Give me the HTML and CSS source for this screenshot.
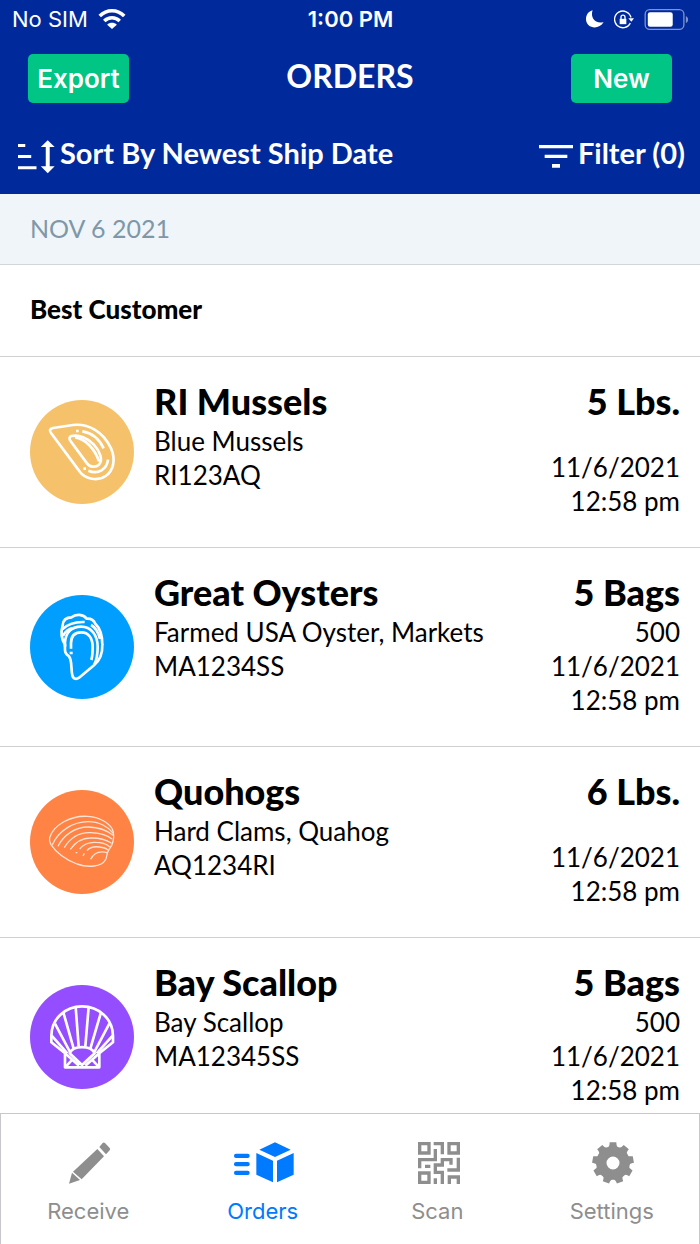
FILE: index.html
```
<!DOCTYPE html>
<html lang="en">

<head>
	<meta charset="UTF-8">
	<meta name="viewport" content="width=device-width, initial-scale=1.0">
	<title>Orders</title>
	<link rel="stylesheet" href="styles.css">
</head>

<body>
	<header>
		<div class="status-bar">
			<div class="carrier">
				<span>No SIM</span>
				<svg class="wifi" viewBox="0 0 84 62" fill="none" stroke="#fff" stroke-width="11">
					<path d="M4 22C26 0 58 0 80 22" />
					<path d="M18 37C32 24 52 24 66 37" />
					<path d="M42 62L27 49C35 41 49 41 57 49Z" fill="#fff" stroke="none" />
				</svg>
			</div>
			<time>1:00 PM</time>
			<div class="indicators">
				<svg class="moon" viewBox="0 0 54 54" fill="#fff">
					<path d="M20 1C12 22 28 44 53 36C38 62 0 55 0 27C0 14 8 4 20 1Z" />
				</svg>
				<svg class="lock" viewBox="0 0 60 56" fill="none" stroke="#fff" stroke-width="4">
					<path d="M49 39A25 25 0 1 1 51 22" />
					<path d="M43 24H60L52 35Z" fill="#fff" stroke="none" />
					<path d="M17 26H37V42H17Z" fill="#fff" stroke="none" />
					<path d="M21 27V21C21 13 33 13 33 21V27" />
				</svg>
				<svg class="battery" viewBox="0 0 134 64">
					<rect x="2" y="2" width="118" height="60" rx="14" fill="none" stroke="#7f93cd" stroke-width="4" />
					<rect x="10" y="10" width="76" height="44" rx="7" fill="#fff" />
					<path d="M126 21C135 26 135 38 126 43Z" fill="#7f93cd" />
				</svg>
			</div>
		</div>
		<div class="title-bar">
			<button type="button" class="action">Export</button>
			<h1>ORDERS</h1>
			<button type="button" class="action">New</button>
		</div>
		<div class="toolbar">
			<button type="button">
				<svg class="sort-icon" viewBox="0 0 112 102" fill="#fff">
					<path d="M0 12H22V21H0ZM0 45H40V54H0ZM0 79H56V88H0Z" />
					<path d="M90 0L111 21H96V79H111L90 100L69 79H84V21H69Z" />
				</svg>
				Sort By Newest Ship Date
			</button>
			<button type="button">
				<svg class="filter-icon" viewBox="0 0 102 69" fill="#fff">
					<path d="M0 0H102V10H0ZM17 29H85V39H17ZM39 57H63V68H39Z" />
				</svg>
				Filter (0)
			</button>
		</div>
	</header>

	<main>
		<h2 class="date">NOV 6 2021</h2>
		<h3 class="customer">Best Customer</h3>
		<ul class="orders">
			<li>
				<svg class="product-icon mussel" viewBox="31 31 312 312">
					<path d="M100 115C91 117 88 123 94 130L178 243C197 270 235 275 258 259C283 241 288 208 274 176C251 126 207 101 160 106Z" />
					<path d="M155 139C148 142 148 148 153 155L202 221C211 233 228 234 238 225C251 211 241 185 222 164C204 145 178 134 155 139Z" />
					<path d="M166 143C195 146 226 177 238 215" />
					<path d="M188 125C216 129 239 149 252 176M265 210C262 238 236 256 206 243M169 124H177M191 237H199" />
				</svg>
				<div class="details">
					<h4>RI Mussels</h4>
					<p>Blue Mussels</p>
					<p>RI123AQ</p>
				</div>
				<div class="amount">
					<h4>5 Lbs.</h4>
					<p class="blank"></p>
					<p>11/6/2021</p>
					<p>12:58 pm</p>
				</div>
			</li>
			<li>
				<svg class="product-icon oyster" viewBox="31 31 312 312">
					<path d="M136 180C122 158 124 139 129 122C130 107 140 98 156 98C168 87 191 88 201 102C213 101 223 108 227 117C243 132 248 151 248 180C249 208 240 228 223 242L180 278C172 285 160 284 158 272C153 250 158 228 148 215C136 207 135 202 136 180Z" />
					<path d="M136 186V173C138 142 158 126 184 126C215 126 234 153 234 186C234 211 231 226 224 239" />
					<path d="M154 192V176C154 154 166 143 185 143C206 143 219 160 219 187C219 205 218 216 215 226M150 205H159" />
					<path d="M128 134C143 119 165 111 195 112M130 154C139 136 150 131 162 130M214 121C229 129 237 146 241 163" />
				</svg>
				<div class="details">
					<h4>Great Oysters</h4>
					<p>Farmed USA Oyster, Markets</p>
					<p>MA1234SS</p>
				</div>
				<div class="amount">
					<h4>5 Bags</h4>
					<p>500</p>
					<p>11/6/2021</p>
					<p>12:58 pm</p>
				</div>
			</li>
			<li>
				<svg class="product-icon clam" viewBox="31 31 312 312">
					<path d="M90 174C101 137 151 107 204 110C242 112 276 134 281 157C285 181 278 197 268 210C259 219 264 232 257 241C246 261 206 265 172 253C138 240 109 218 94 195C90 188 88 182 90 174Z" />
					<path d="M98 195C116 155 159 126 205 126C238 126 266 141 281 161" />
					<path d="M115 200C131 167 167 141 207 142C240 143 264 154 280 167" />
					<path d="M134 204C151 176 178 158 211 159C241 160 263 167 277 178" />
					<path d="M152 209C168 187 185 175 211 175C238 174 259 180 275 190" />
					<path d="M180 208C192 193 208 187 228 188C246 188 260 193 270 201" />
					<path d="M202 213C211 201 226 200 240 202C252 203 260 206 266 211" />
					<path d="M213 239C223 218 240 213 263 219M168 219H173M194 221L190 229" />
				</svg>
				<div class="details">
					<h4>Quohogs</h4>
					<p>Hard Clams, Quahog</p>
					<p>AQ1234RI</p>
				</div>
				<div class="amount">
					<h4>6 Lbs.</h4>
					<p class="blank"></p>
					<p>11/6/2021</p>
					<p>12:58 pm</p>
				</div>
			</li>
			<li>
				<svg class="product-icon scallop" viewBox="31 31 312 312">
					<path d="M136 236L95 203V184C95 132 137 95 187 95S280 132 280 184V203L239 236V278H136Z" />
					<path d="M150 236C160 211 214 211 225 236L187 271ZM139 275L156 257M236 275L219 257M136 236L178 273M239 236L197 273" />
					<path d="M168 97L177 215M207 97L197 215M131 113L162 222M244 113L212 222M106 147L151 232M269 147L224 232M96 183L143 236M279 183L231 236" />
				</svg>
				<div class="details">
					<h4>Bay Scallop</h4>
					<p>Bay Scallop</p>
					<p>MA12345SS</p>
				</div>
				<div class="amount">
					<h4>5 Bags</h4>
					<p>500</p>
					<p>11/6/2021</p>
					<p>12:58 pm</p>
				</div>
			</li>
		</ul>
	</main>

	<nav>
		<a href="#receive">
			<svg viewBox="0 0 126 126" fill="currentColor">
				<path d="M85 21L105 43L38 112L12 89ZM91 15L101 3Q104 0 108 3L122 18Q125 22 122 25L111 37Z" />
				<path d="M9 92L33 114L0 125Z" />
			</svg>
			Receive
		</a>
		<a href="#orders" class="active">
			<svg class="wide" viewBox="0 0 180 126" fill="currentColor">
				<rect x="0" y="35" width="47" height="13" rx="6" />
				<rect x="0" y="60" width="47" height="13" rx="6" />
				<rect x="0" y="86" width="47" height="13" rx="6" />
				<path d="M123 1L170 23L123 45L76 23ZM67 33L117 56V121L67 98ZM179 33L129 56V121L179 98Z" />
			</svg>
			Orders
		</a>
		<a href="#scan">
			<svg viewBox="0 0 126 126" fill="none" stroke="currentColor" stroke-width="10">
				<path d="M5 5H33V33H5ZM93 5H121V33H93ZM5 93H33V121H5Z" />
				<path d="M47 5H73V37M52 21V53H5V79M21 73H37M121 47V84H88" />
				<path d="M99 68V53H73V69H52V91H73V126M52 109V126M94 126V105H121V126" />
			</svg>
			Scan
		</a>
		<a href="#settings">
			<svg viewBox="0 0 126 126" fill="currentColor">
				<circle cx="63" cy="63" r="35" fill="none" stroke="currentColor" stroke-width="31" />
				<path id="tooth" d="M47 18Q53 14 53 1H73Q73 14 79 18Z" />
				<use href="#tooth" transform="rotate(40 63 63)" />
				<use href="#tooth" transform="rotate(80 63 63)" />
				<use href="#tooth" transform="rotate(120 63 63)" />
				<use href="#tooth" transform="rotate(160 63 63)" />
				<use href="#tooth" transform="rotate(200 63 63)" />
				<use href="#tooth" transform="rotate(240 63 63)" />
				<use href="#tooth" transform="rotate(280 63 63)" />
				<use href="#tooth" transform="rotate(320 63 63)" />
			</svg>
			Settings
		</a>
	</nav>
</body>

</html>
```
FILE: styles.css
```
* {
	box-sizing: border-box;
	margin: 0;
	padding: 0;
}

body {
	font-family: 'Lato', sans-serif;
	display: flex;
	flex-direction: column;
	height: 100vh;
	background-color: #fff;
	color: #000;
}

button {
	border: none;
	background: none;
	color: #fff;
	font-family: inherit;
	cursor: pointer;
}

header {
	flex: none;
	background-color: #002a9b;
	color: #fff;
}

.status-bar {
	display: grid;
	grid-template-columns: 1fr auto 1fr;
	align-items: center;
	height: 38px;
	padding: 0 11px 0 12px;
	font-family: 'Inter', sans-serif;
	font-size: 22px;
}

.status-bar time {
	font-weight: 600;
}

.carrier,
.indicators {
	display: flex;
	align-items: center;
	gap: 10px;
}

.indicators {
	justify-content: flex-end;
}

.wifi {
	width: 28px;
	height: 20px;
}

.moon {
	width: 18px;
	height: 18px;
}

.lock {
	width: 20px;
	height: 19px;
}

.battery {
	width: 45px;
	height: 21px;
}

.title-bar {
	display: flex;
	justify-content: space-between;
	padding: 16px 28px 0;
}

.title-bar h1 {
	font-size: 32px;
	line-height: 44px;
}

.action {
	width: 101px;
	height: 49px;
	border-radius: 5px;
	background-color: #00c585;
	font-family: 'Inter', sans-serif;
	font-size: 26px;
	font-weight: 600;
}

.toolbar {
	display: flex;
	justify-content: space-between;
	align-items: center;
	height: 91px;
	padding: 8px 15px 0 18px;
}

.toolbar button {
	display: flex;
	align-items: center;
	gap: 5px;
	font-size: 29px;
	font-weight: 700;
}

.toolbar svg {
	margin-top: 8px;
}

.sort-icon {
	width: 37px;
	height: 34px;
}

.filter-icon {
	width: 34px;
	height: 23px;
}

main {
	flex: 1;
	min-height: 0;
	overflow-y: auto;
	scrollbar-width: none;
}

.date {
	padding: 0 30px 2px;
	border-bottom: 1px solid #d2d6da;
	background-color: #f0f5fa;
	color: #7f98a8;
	font-size: 25px;
	font-weight: 400;
	line-height: 68px;
}

.customer {
	padding: 0 30px 3px;
	border-bottom: 1px solid #d0d0d2;
	font-size: 26px;
	font-weight: 900;
	line-height: 88px;
}

.orders {
	list-style: none;
}

.orders li {
	display: flex;
	align-items: center;
	gap: 20px;
	padding: 22px 20px 29px 30px;
	border-bottom: 1px solid #d0d0d2;
}

.product-icon {
	flex: none;
	width: 104px;
	height: 104px;
	margin-top: 7px;
	border-radius: 50%;
	fill: none;
	stroke: #fff;
	stroke-width: 8;
	stroke-linejoin: round;
}

.mussel {
	background-color: #f5c26b;
}

.oyster {
	background-color: #009fff;
}

.clam {
	background-color: #ff8344;
	stroke: #ffe3d5;
	stroke-width: 4;
}

.scallop {
	background-color: #954eff;
}

.details {
	flex: 1;
	align-self: flex-start;
}

.amount {
	text-align: right;
}

.orders h4 {
	margin-bottom: 1px;
	font-size: 36px;
	font-weight: 900;
	line-height: 44px;
}

.orders p {
	font-size: 26px;
	line-height: 34px;
}

.orders .blank {
	height: 26px;
}

nav {
	flex: none;
	display: flex;
	border: 1px solid #c8c8cc;
	border-bottom: none;
	background-color: #fff;
}

nav a {
	flex: 1;
	display: flex;
	flex-direction: column;
	align-items: center;
	gap: 12px;
	padding: 28px 0 18px;
	color: #8e8e8e;
	font-family: 'Inter', sans-serif;
	font-size: 22px;
	line-height: 30px;
	text-decoration: none;
}

nav svg {
	width: 42px;
	height: 42px;
	margin-left: 3px;
}

nav .wide {
	width: 60px;
}

nav .active {
	color: #007aff;
}
```
